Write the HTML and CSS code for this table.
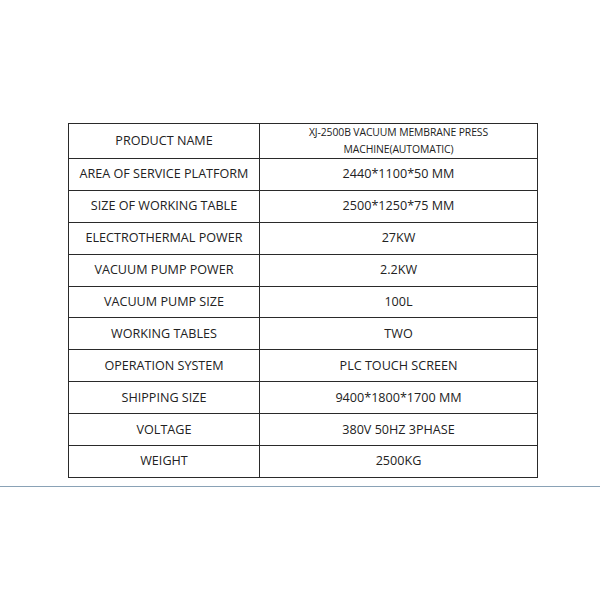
FILE: index.html
```html
<!DOCTYPE html>
<html>
<head>
<meta charset="utf-8">
<link rel="stylesheet" href="styles.css">
</head>
<body>
<div class="page">
  <table class="spec">
    <colgroup><col class="c1"><col class="c2"></colgroup>
    <tr class="first"><td>PRODUCT NAME</td><td class="small">XJ-2500B VACUUM MEMBRANE PRESS<br>MACHINE(AUTOMATIC)</td></tr>
    <tr><td>AREA OF SERVICE PLATFORM</td><td>2440*1100*50 MM</td></tr>
    <tr><td>SIZE OF WORKING TABLE</td><td>2500*1250*75 MM</td></tr>
    <tr><td>ELECTROTHERMAL POWER</td><td>27KW</td></tr>
    <tr><td>VACUUM PUMP POWER</td><td>2.2KW</td></tr>
    <tr><td>VACUUM PUMP SIZE</td><td>100L</td></tr>
    <tr><td>WORKING TABLES</td><td>TWO</td></tr>
    <tr><td>OPERATION SYSTEM</td><td>PLC TOUCH SCREEN</td></tr>
    <tr><td>SHIPPING SIZE</td><td>9400*1800*1700 MM</td></tr>
    <tr><td>VOLTAGE</td><td>380V 50HZ 3PHASE</td></tr>
    <tr><td>WEIGHT</td><td>2500KG</td></tr>
  </table>
  <div class="rule"></div>
</div>
</body>
</html>
```
FILE: styles.css
```css
html, body {
  margin: 0;
  padding: 0;
  background: #fff;
}
.page {
  padding-top: 123px;
  font-family: "Open Sans", "Noto Sans", sans-serif;
  color: #222;
}
.spec {
  margin-left: 68px;
  border-collapse: collapse;
  table-layout: fixed;
  width: 469px;
}
.c1 { width: 191px; }
.c2 { width: 278px; }
.spec td {
  border: 1.5px solid #2a2a2a;
  height: 30.9px;
  padding: 0;
  text-align: center;
  vertical-align: middle;
  font-size: 12.6px;
  line-height: 16px;
}
.spec tr.first td {
  height: 32px;
}
.spec td.small {
  font-size: 10.4px;
  line-height: 17px;
  letter-spacing: -0.1px;
}
.rule {
  margin-top: 8px;
  height: 1px;
  background: #8aa2b6;
}
```
